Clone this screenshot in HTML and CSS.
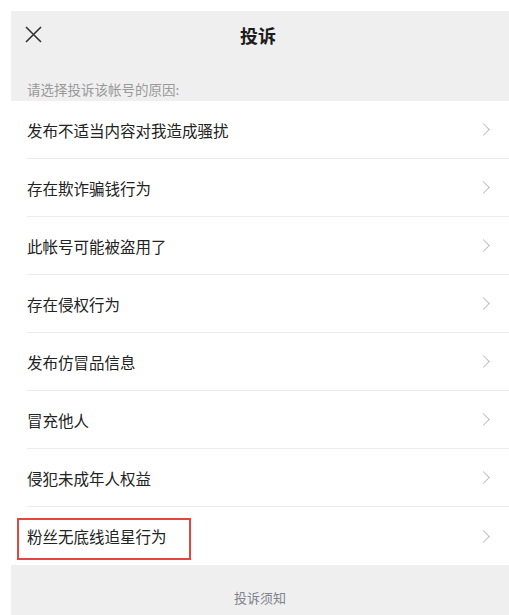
FILE: index.html
```html
<!DOCTYPE html>
<html lang="zh-CN">
<head>
    <meta charset="UTF-8">
    <meta name="viewport" content="width=device-width, initial-scale=1.0">
    <title>投诉</title>
    <link rel="stylesheet" href="styles.css">
</head>
<body>
    <div class="page">
        <div class="header">
            <span class="close">
                <svg width="17" height="17" viewBox="0 0 17 17"><path d="M1 1L16 16M16 1L1 16" stroke="#333" stroke-width="1.6" fill="none"/></svg>
            </span>
            <h1>投诉</h1>
        </div>
        <div class="hint">请选择投诉该帐号的原因:</div>

        <ul class="reasons">
            <li><span>发布不适当内容对我造成骚扰</span><i class="arrow"></i></li>
            <li><span>存在欺诈骗钱行为</span><i class="arrow"></i></li>
            <li><span>此帐号可能被盗用了</span><i class="arrow"></i></li>
            <li><span>存在侵权行为</span><i class="arrow"></i></li>
            <li><span>发布仿冒品信息</span><i class="arrow"></i></li>
            <li><span>冒充他人</span><i class="arrow"></i></li>
            <li><span>侵犯未成年人权益</span><i class="arrow"></i></li>
            <li class="marked"><span>粉丝无底线追星行为</span><i class="arrow"></i></li>
        </ul>

        <div class="footer">投诉须知</div>
    </div>
</body>
</html>
```

FILE: styles.css
```css
html, body {
    height: 100%;
}
body {
    margin: 0;
    padding: 11px 0 0 11px;
    box-sizing: border-box;
    background: #fff;
    overflow: hidden;
    font-family: "Noto Sans CJK SC", "Noto Sans", sans-serif;
    color: #222;
}
.page {
    background: #efefef;
    height: 100%;
}
.header {
    position: relative;
    height: 48px;
    display: flex;
    align-items: center;
    justify-content: center;
}
.header h1 {
    margin: 0;
    font-size: 18px;
    font-weight: 700;
    color: #1c1c1c;
    line-height: 24px;
    transform: translateX(-2px);
}
.close {
    position: absolute;
    left: 14px;
    top: 15px;
    display: flex;
}
.hint {
    padding: 21px 16px 3px;
    font-size: 13.5px;
    line-height: 18px;
    color: #999;
}
.reasons {
    list-style: none;
    margin: 0;
    padding: 0 0 0 16px;
    background: #fff;
}
.reasons li {
    position: relative;
    height: 58px;
    display: flex;
    align-items: center;
    justify-content: space-between;
    padding-right: 19px;
    border-bottom: 1px solid #ececec;
    box-sizing: border-box;
    font-size: 15.5px;
    color: #222;
}
.reasons li:last-child {
    border-bottom: none;
}
.arrow {
    width: 8px;
    height: 8px;
    border-top: 1.5px solid #bdbdbd;
    border-right: 1.5px solid #bdbdbd;
    transform: rotate(45deg);
    margin-right: 2px;
}
.marked::before {
    content: "";
    position: absolute;
    left: -10px;
    top: 11px;
    width: 174px;
    height: 42px;
    border: 2px solid #e2463f;
    box-sizing: border-box;
}
.footer {
    padding-top: 24px;
    text-align: center;
    font-size: 13px;
    line-height: 18px;
    color: #7e838e;
}
```
